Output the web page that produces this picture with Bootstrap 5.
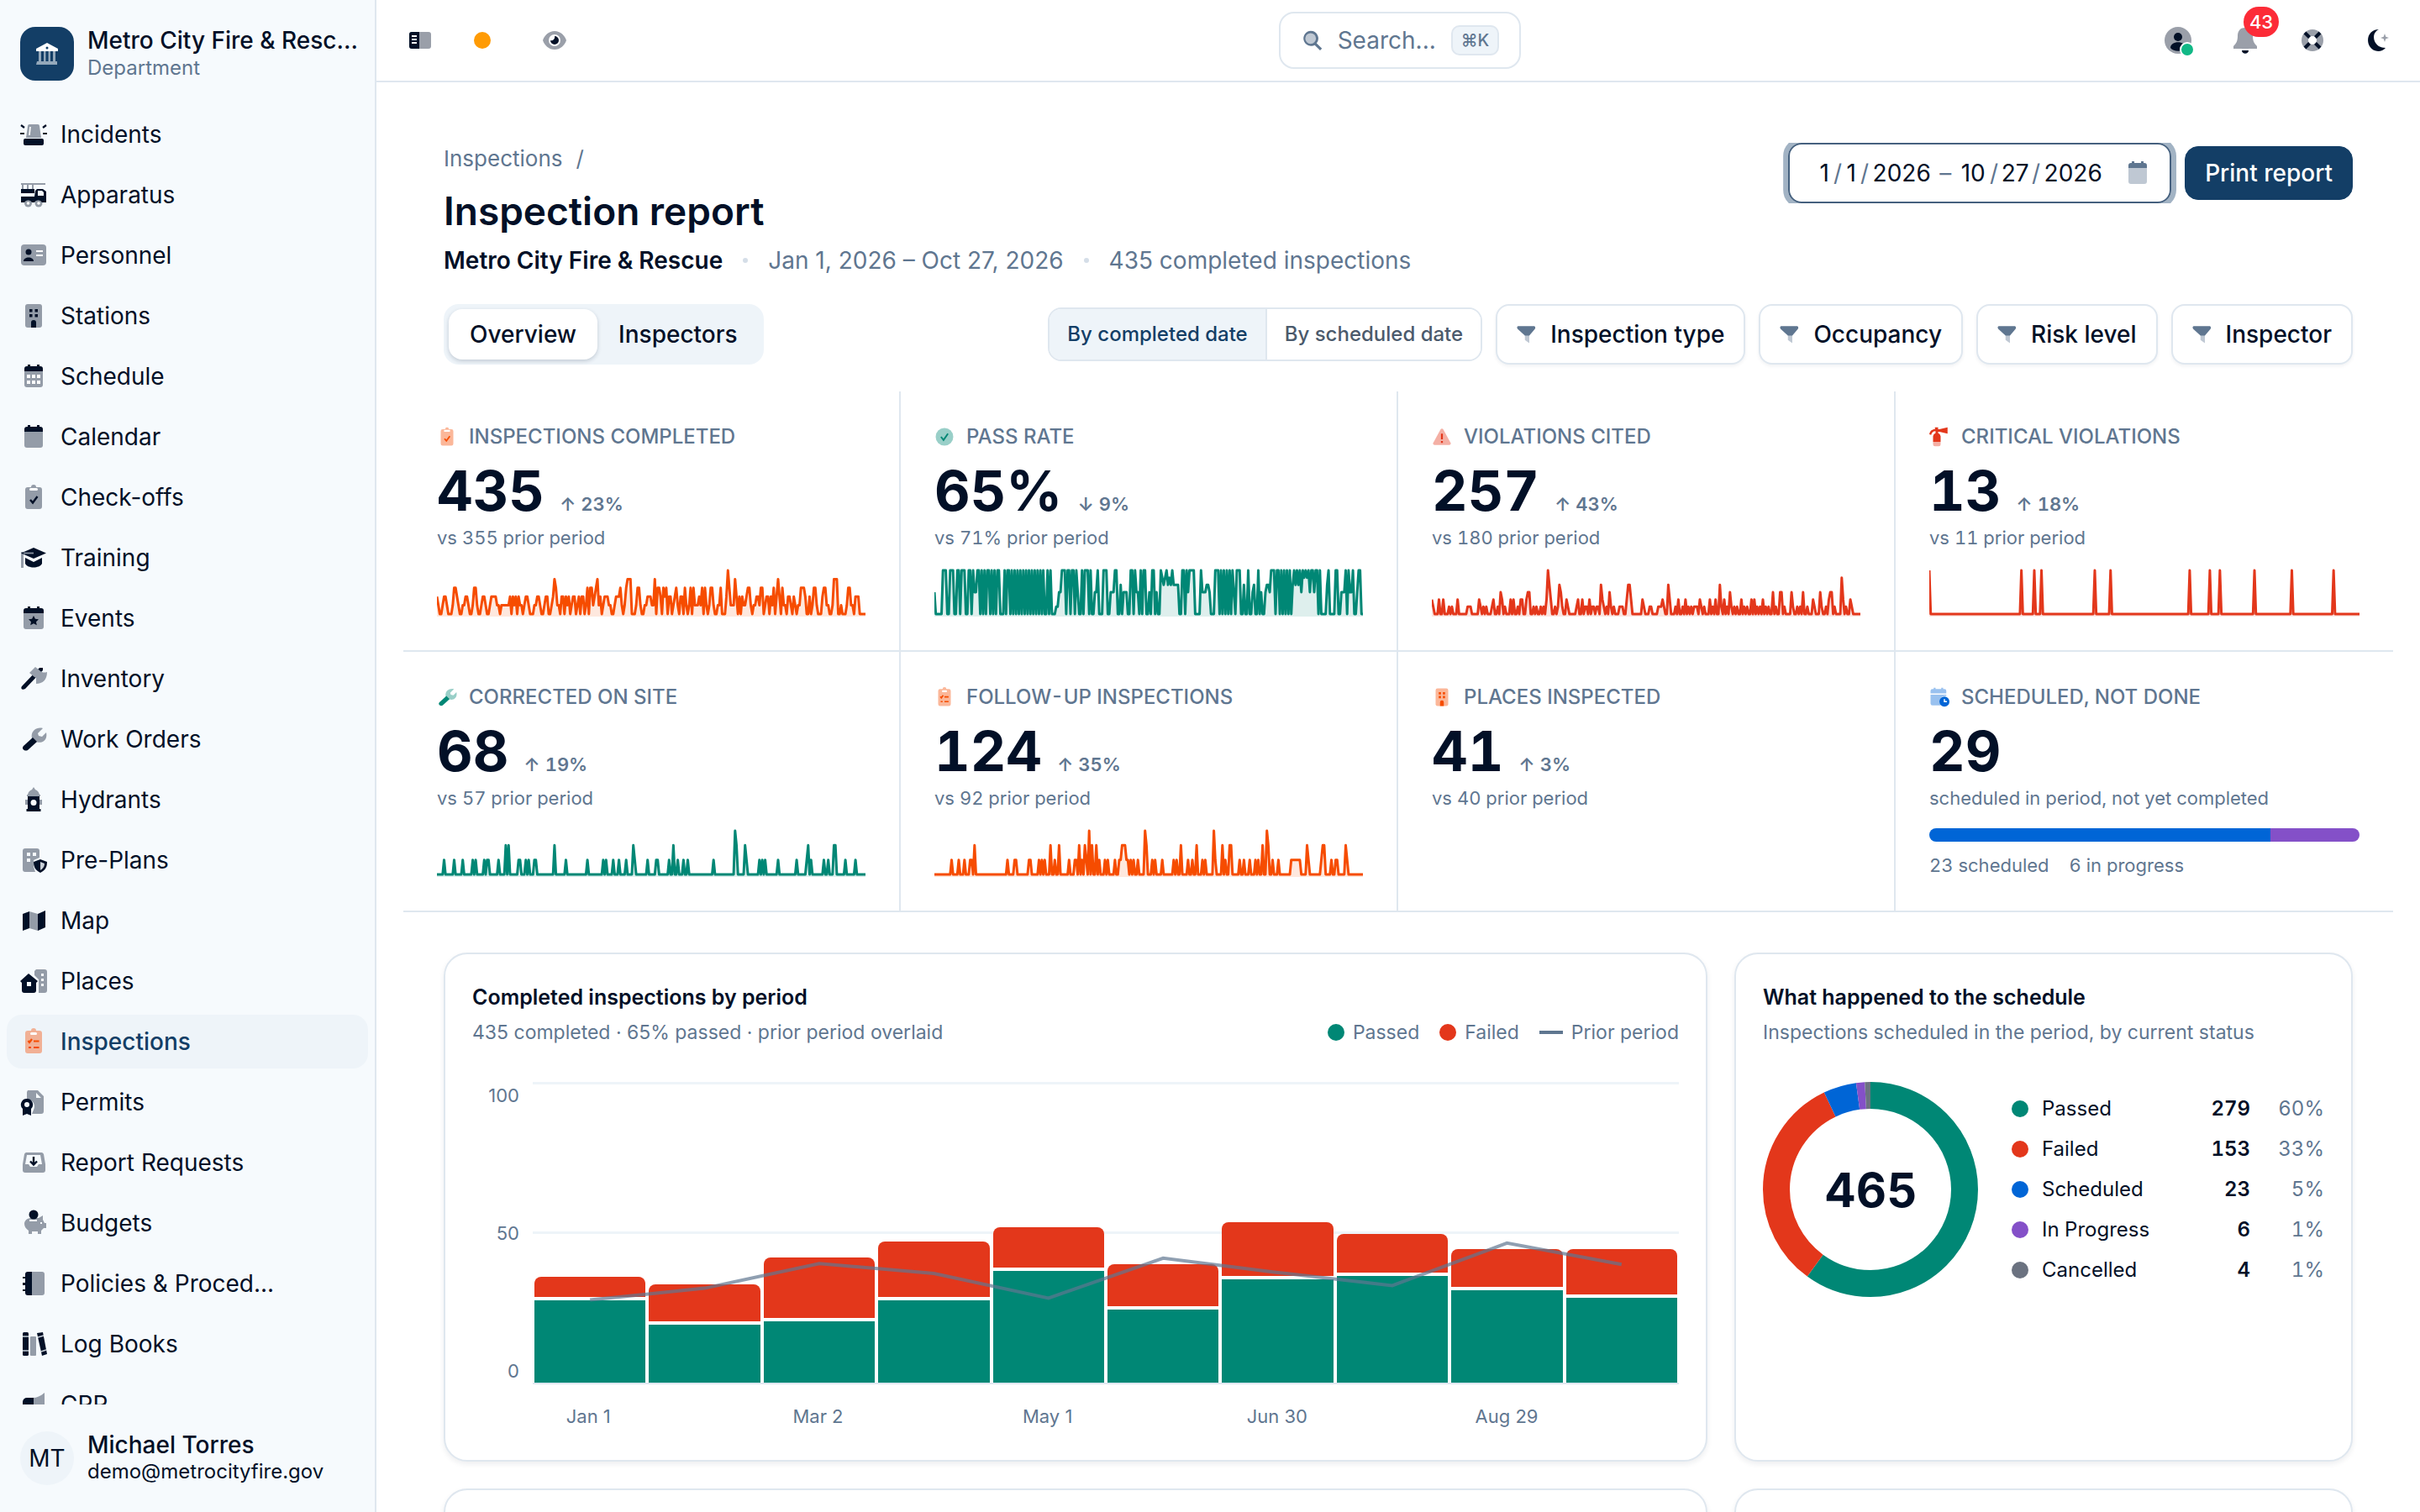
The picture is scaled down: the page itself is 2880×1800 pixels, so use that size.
<!DOCTYPE html>
<html lang="en">
<head>
<meta charset="utf-8">
<meta name="viewport" content="width=device-width, initial-scale=1">
<title>Inspection report</title>
<link href="https://cdn.jsdelivr.net/npm/bootstrap@5.3.0/dist/css/bootstrap.min.css" rel="stylesheet">
<style>
:root{--ink:#021027;--slate:#5f7690;--line:#dfe7ef;--navy:#133e66;--pale:#eef4f9;--side:#f6fafd;--green:#008775;--red:#e3371b;--orange:#f64c00;--blue:#0065d6;--purple:#8450c8;--gray:#6b7280}
body{font-family:Inter,"Liberation Sans",sans-serif;font-size:28px;line-height:40px;color:var(--ink);background:#fff}
button,input{font-family:inherit;color:inherit}
.app-shell{height:100vh;overflow:hidden}
.side-bar{width:448px;background:var(--side);border-right:2px solid var(--line)}
.brand-row{padding:32px 16px 0 24px;gap:16px;height:120px}
.brand-logo{width:64px;height:64px;border-radius:18px;background:var(--navy);color:#fff}
.brand-name{line-height:32px;white-space:nowrap}
.fs-sub{font-size:24px;line-height:34px}
.fs-tiny{font-size:22px;line-height:32px}
.slate{color:var(--slate)}
.side-scroll{padding:8px 8px 0;overflow:hidden;min-height:0}
.side-link{height:64px;margin-bottom:8px;padding:0 16px;gap:16px;border-radius:18px;color:var(--ink);text-decoration:none;flex:none}
.side-link.current{background:var(--pale);color:var(--navy);font-weight:500}
.side-link.current svg{color:var(--orange)}
.ico{width:32px;height:32px;flex:none;fill:currentColor}
.ico-sm{width:24px;height:24px}
.side-foot{padding:32px 24px;gap:16px}
.face{width:64px;height:64px;border-radius:50%;background:var(--pale)}
.side-foot .who,.side-foot .fs-sub{line-height:32px}
.top-bar{height:98px;border-bottom:2px solid var(--line);padding:0 32px 0 36px}
.icon-btn{border:0;background:none;padding:0;width:32px;height:32px;position:relative;display:flex}
.search-btn{height:68px;border:2px solid var(--line);border-radius:18px;background:#fff;padding:0 24px 0 26px;gap:18px;color:var(--slate)}
.key-cap{background:var(--pale);color:var(--slate);border:2px solid var(--line);border-radius:10px;font:500 20px/32px Inter,sans-serif;padding:0 10px}
.alert-count{position:absolute;left:14px;top:-24px;width:42px;height:36px;border-radius:18px;background:#fc2b37;color:#fff;font-size:22px;line-height:36px;font-weight:500}
.online-dot{position:absolute;right:-4px;bottom:-4px;width:18px;height:18px;border-radius:50%;background:#12b886;border:2px solid #fff}
.main-pane{padding:72px 80px 0;min-height:0;overflow:hidden}
.crumbs{font-size:26px;line-height:38px;gap:16px}
.crumbs a{color:var(--slate);text-decoration:none}
.page-title{font-size:46px;line-height:62px;font-weight:600;margin:12px 0 8px}
.dot-sep{width:6px;height:6px;border-radius:50%;background:#d5dee8}
.date-box{height:72px;border:2px solid #46617f;border-radius:16px;box-shadow:0 0 0 6px #a2b3c4;clip-path:inset(0 -6px);padding:0 22px 0 32px}
.date-box input{border:0;padding:0;background:none;text-align:center;outline:0}
.w-d1{width:18px}.w-d2{width:36px}.w-d4{width:74px}
.date-box .slash{width:14px;text-align:center;color:var(--slate)}
.btn-print{--bs-btn-bg:var(--navy);--bs-btn-color:#fff;--bs-btn-border-color:var(--navy);height:64px;font-size:28px;line-height:40px;font-weight:500;border-radius:16px;padding:0 23px}
.tab-set{background:var(--pale);border-radius:18px;padding:6px;height:72px}
.tab-set button{border:0;background:none;border-radius:16px;padding:0 25px;font-weight:500}
.tab-set button.on{background:#fff;box-shadow:0 2px 5px rgba(20,40,70,.2)}
.seg-set{height:64px;border:2px solid var(--line);border-radius:16px;overflow:hidden}
.seg-set button{border:0;background:#fff;font-size:24px;font-weight:500;padding:0 21px;color:#4b5a6c}
.seg-set button.on{background:var(--pale);color:var(--navy);border-right:2px solid var(--line)}
.filter-btn{height:72px;border:2px solid var(--line);border-radius:16px;background:#fff;padding:0 23px;gap:16px;font-weight:500;box-shadow:0 2px 4px rgba(20,40,70,.06)}
.filter-btn svg{color:var(--slate)}
.stat-grid{display:grid;grid-template-columns:repeat(4,1fr);margin:32px -48px 48px;font-variant-numeric:tabular-nums}
.stat-tile{padding:40px;height:310px;border-right:2px solid var(--line);border-bottom:2px solid var(--line)}
.stat-tile:nth-child(4n){border-right:0}
.stat-label{font-size:24px;line-height:28px;font-weight:500;color:var(--slate);gap:14px}
.stat-num{font-size:66px;line-height:72px;font-weight:700}
.stat-head{gap:18px;margin-top:14px}
.stat-delta{font-size:22px;font-weight:600;color:var(--slate)}
.stat-note{margin:4px 0 20px}
.spark{display:block;width:100%;height:60px}
.split-bar{height:16px;border-radius:8px;overflow:hidden;margin-bottom:12px}
.panel{border:2px solid var(--line);border-radius:28px;padding:32px;height:606px;box-shadow:0 3px 6px rgba(20,40,70,.08);background:#fff}
.panel h2{font-size:25px;line-height:38px;font-weight:600;margin:0}
.panel-note{font-size:23px;line-height:46px;color:var(--slate)}
.board{--bs-gutter-x:32px;--bs-gutter-y:32px}
.round-dot{width:20px;height:20px;border-radius:50%;flex:none}
.dash-mark{width:28px;height:4px;background:var(--slate)}
.legend-set{gap:24px}
.legend-set span{gap:10px}
.chart-row{margin-top:36px;height:360px}
.y-axis{width:56px;margin-right:16px;font-size:22px;line-height:32px;color:var(--slate)}
.plot{position:relative;flex:1;border-bottom:2px solid var(--line);background:linear-gradient(var(--pale),var(--pale)) 0 0/100% 3px no-repeat,linear-gradient(var(--pale),var(--pale)) 0 50%/100% 3px no-repeat}
.bar-col{flex:1;padding:0 2px;height:100%}
.bar-col .fail{background:var(--red);border-radius:8px 8px 0 0;margin-bottom:4px}
.bar-col .pass{background:var(--green)}
.trend{position:absolute;left:0;top:0;width:100%;height:100%}
.x-axis{margin:22px 0 0 70px;font-size:22px;line-height:32px;color:var(--slate)}
.x-axis span{flex:1}
.donut-row{margin-top:36px;gap:40px}
.donut{width:256px;height:256px;flex:none}
.tally{font-size:24px;line-height:48px;font-variant-numeric:tabular-nums}
.tally td{padding:0}
.c-num{width:90px}.c-pct{width:88px}
</style>
</head>
<body>
<svg width="0" height="0" class="position-absolute" aria-hidden="true">
<defs>
<symbol id="i-siren" viewBox="0 0 32 32"><path opacity=".4" d="M11 4h10a2 2 0 0 1 2 2l2 14H7L9 6a2 2 0 0 1 2-2z"/><path d="M12 7l-1 10" stroke="#fff" stroke-width="1.6"/><rect x="4" y="21" width="24" height="8" rx="2"/><path d="M0 15h5M27 15h5M1 5l4 3M31 5l-4 3" stroke="currentColor" stroke-width="2.200" fill="none"/></symbol>
<symbol id="i-truck" viewBox="0 0 32 32"><path opacity=".4" d="M1 2h29v2h-14V9h-2V4h-4V9H8V4H4v5H2V4H1z"/><path d="M1 9h16v5H1zM1 18h16l1-7 2-2h7l4 3v13h-5a5 5 0 0 0-9 0h-3a5 5 0 0 0-9 0H1z"/><path d="M21 11h5l2 2v4h-7z" fill="#f6fafd"/><g opacity=".4"><circle cx="9.500" cy="26" r="4.500"/><circle cx="22" cy="26" r="4.500"/></g><circle cx="9.500" cy="26" r="1.800" fill="#fff"/><circle cx="22" cy="26" r="1.800" fill="#fff"/></symbol>
<symbol id="i-id" viewBox="0 0 32 32"><rect opacity=".4" x="1" y="3" width="30" height="25" rx="4"/><circle cx="10" cy="12" r="3.500"/><path d="M4 23c0-6 12-6 12 0z"/><path d="M19 11h8M19 16h8" stroke="#fff" stroke-width="2"/></symbol>
<symbol id="i-bldg" viewBox="0 0 32 32"><rect opacity=".4" x="6" y="2" width="20" height="28" rx="3"/><path d="M11 8h3.500v3.500H11zM17.500 8H21v3.500h-3.500zM11 14h3.500v3.500H11zM17.500 14H21v3.500h-3.500zM13 30v-6a3 3 0 0 1 6 0v6z"/></symbol>
<symbol id="i-calgrid" viewBox="0 0 32 32"><path opacity=".4" d="M5 10h22v16a3 3 0 0 1-3 3H8a3 3 0 0 1-3-3z"/><path d="M5 10V7a3 3 0 0 1 3-3h1V2h3v2h8V2h3v2h1a3 3 0 0 1 3 3v3z"/><path d="M8 14h4v4H8zM14 14h4v4h-4zM20 14h4v4h-4zM8 21h4v4H8zM14 21h4v4h-4zM20 21h4v4h-4z" fill="#fff"/></symbol>
<symbol id="i-cal" viewBox="0 0 32 32"><path opacity=".4" d="M5 10h22v16a3 3 0 0 1-3 3H8a3 3 0 0 1-3-3z"/><path d="M5 10V7a3 3 0 0 1 3-3h1V2h3v2h8V2h3v2h1a3 3 0 0 1 3 3v3z"/></symbol>
<symbol id="i-clip" viewBox="0 0 32 32"><path opacity=".4" d="M9 4h4a3 3 0 0 1 6 0h4a3 3 0 0 1 3 3v20a3 3 0 0 1-3 3H9a3 3 0 0 1-3-3V7a3 3 0 0 1 3-3z"/><rect x="11" y="5" width="10" height="3" rx="1.500" fill="#fff"/><path d="M12 19l3 3.500L20.500 15" fill="none" stroke="currentColor" stroke-width="2.400"/></symbol>
<symbol id="i-cap" viewBox="0 0 32 32"><path opacity=".4" d="M1 9h3v19H1z"/><path d="M16 4l15 6.500L16 17 1 10.500zM6 16l10 5 10-5v7c-3 6-17 6-20 0z"/><path d="M4 10.500h12" stroke="#8a94a1" stroke-width="1.800"/></symbol>
<symbol id="i-star" viewBox="0 0 32 32"><path opacity=".4" d="M4 10h24v16a3 3 0 0 1-3 3H7a3 3 0 0 1-3-3z"/><path d="M4 10V7a3 3 0 0 1 3-3h2V2h3v2h8V2h3v2h2a3 3 0 0 1 3 3v3zM16 13l1.900 3.800 4.100.5-3 2.900.8 4.100-3.800-2-3.800 2 .8-4.100-3-2.900 4.100-.5z"/></symbol>
<symbol id="i-axe" viewBox="0 0 32 32"><path d="M2 25L20 6l3-3h4v3l-4 4L6 28c-3 2-6 0-4-3z"/><path fill="#979fab" d="M11 9l7-7 5 4c3 3 6 3 9 2 0 9-5 14-13 14v-7l-2-1z"/></symbol>
<symbol id="i-wrench" viewBox="0 0 32 32"><path d="M4 24l11-10 5 5L9 29c-4 2-8-2-5-5z"/><path opacity=".4" d="M14 15c-2-8 5-14 13-12l-6 6 1 3 4 1 5-5c2 9-5 14-12 11z"/></symbol>
<symbol id="i-hydrant" viewBox="0 0 32 32"><path opacity=".4" d="M9 10c1-4 3-5 5-6l2-3 2 3c2 1 4 2 5 6h1v2H8v-2zM6 16h3v6H6zM23 16h3v6h-3z"/><path fill-rule="evenodd" d="M9 12h14v15h1.500v3h-17v-3H9zM16 16a3.500 3.500 0 1 0 0 7 3.500 3.500 0 0 0 0-7z"/></symbol>
<symbol id="i-plan" viewBox="0 0 32 32"><path opacity=".4" fill-rule="evenodd" d="M6 2h14a3 3 0 0 1 3 3v8l-7 3v8l2 6H6a3 3 0 0 1-3-3V5a3 3 0 0 1 3-3zM8 7v4h4V7zM15 7v4h4V7zM8 14v4h4v-4z"/><path d="M24 15l8 3c0 6-2 10-8 13-6-3-8-7-8-13z"/><path d="M24 18l5 2c0 4-2 6-5 8z" fill="#c9d0d8"/></symbol>
<symbol id="i-map" viewBox="0 0 32 32"><path d="M3 8l8-3v20l-8 3zM21 8l9-4v20l-9 4z"/><path opacity=".4" d="M11 5l10 3v20l-10-3z"/></symbol>
<symbol id="i-places" viewBox="0 0 32 32"><path opacity=".4" fill-rule="evenodd" d="M19 2h10a3 3 0 0 1 3 3v22a3 3 0 0 1-3 3h-7V14l-5-5V4zM25 7v3h3V7zM25 13v3h3v-3zM25 19v3h3v-3z"/><path fill-rule="evenodd" d="M10 7l11 9-2 2v9a3 3 0 0 1-3 3H5a3 3 0 0 1-3-3v-9l-2-2zM8 17v5h5v-5z"/></symbol>
<symbol id="i-list" viewBox="0 0 32 32"><path opacity=".4" d="M9 3h4a3 3 0 0 1 6 0h4a3 3 0 0 1 3 3v21a3 3 0 0 1-3 3H9a3 3 0 0 1-3-3V6a3 3 0 0 1 3-3z"/><rect x="12" y="5" width="8" height="3" rx="1.500" fill="#fff"/><path d="M9.500 15l1.500 2 3-4M16 15.500h6.500M16 23h6.500M10 23h3" fill="none" stroke="currentColor" stroke-width="2.200"/></symbol>
<symbol id="i-permit" viewBox="0 0 32 32"><path opacity=".4" fill-rule="evenodd" d="M9 2h12l7 7v18a3 3 0 0 1-3 3H14c1-3 3-6 3-9 0-5-4-8-9-8V4zM19 5v6h6z"/><path fill-rule="evenodd" d="M8 12a7 7 0 0 1 5 12v8l-5-2-5 2v-8a7 7 0 0 1 5-12zM8 16a3 3 0 1 0 0 6 3 3 0 0 0 0-6z"/></symbol>
<symbol id="i-inbox" viewBox="0 0 32 32"><path opacity=".4" fill-rule="evenodd" d="M7 4h18a3 3 0 0 1 3 2l2 12v7a3 3 0 0 1-3 3H6a3 3 0 0 1-3-3v-7L5 6a3 3 0 0 1 2-2zM8 7L6 18h4l2 3h8l2-3h4L24 7z"/><path d="M16 9v9M12 14.500l4 4 4-4" fill="none" stroke="currentColor" stroke-width="2.400"/></symbol>
<symbol id="i-pig" viewBox="0 0 32 32"><circle cx="16" cy="6" r="5.500"/><path opacity=".4" fill-rule="evenodd" d="M12 10h10l5-3v5l2 4h2v6h-3l-3 3v4h-4v-3h-7v3h-4v-4c-3-2-5-5-5-8s2-6 7-7zM11 12v2h9v-2zM24 15v2h2v-2z"/></symbol>
<symbol id="i-book" viewBox="0 0 32 32"><path opacity=".4" d="M14 2h12a3 3 0 0 1 3 3v22a3 3 0 0 1-3 3H14z"/><path d="M9 2h5v28H9a3 3 0 0 1-3-3v-2H3v-2h3v-5H3v-3h3v-5H3V8h3V5a3 3 0 0 1 3-3z"/></symbol>
<symbol id="i-books" viewBox="0 0 32 32"><rect x="3" y="2" width="7" height="28" rx="1.500"/><rect opacity=".4" x="12" y="7" width="7" height="23" rx="1"/><path d="M20 3l7-1 5 26-6 2z"/><path d="M3 7h7M3 24h7M21 8l7-2M25 25l6-2" stroke="#c9d0d8" stroke-width="1.500"/></symbol>
<symbol id="i-horn" viewBox="0 0 32 32"><path opacity=".4" d="M15 8c5 0 9-2 14-6v26c-5-4-9-6-14-6z"/><path d="M8 8h8v14H8a5 5 0 0 1-5-5v-4a5 5 0 0 1 5-5z"/></symbol>
<symbol id="i-civic" viewBox="0 0 32 32"><path d="M16 3l13 7v3H3v-3z"/><circle cx="16" cy="9" r="1.500" fill="#133e66"/><path opacity=".55" d="M6 13h3v12H6zM12 13h2.500v12H12zM17.500 13H20v12h-2.500zM23 13h3v12h-3zM4 25h24v4H3z"/></symbol>
<symbol id="i-panel" viewBox="0 0 32 32"><rect opacity=".4" x="3" y="6" width="26" height="20" rx="3"/><path d="M6 6h9v20H6a3 3 0 0 1-3-3V9a3 3 0 0 1 3-3z"/><path d="M6 11h6M6 15h6M6 19h6" stroke="#fff" stroke-width="1.800"/></symbol>
<symbol id="i-eye" viewBox="0 0 32 32"><path opacity=".4" fill-rule="evenodd" d="M16 5C9 5 4 10 2 16c2 6 7 11 14 11s12-5 14-11C28 10 23 5 16 5zM16 9a7 7 0 1 1 0 14 7 7 0 0 1 0-14z"/><path d="M16 11a5 5 0 1 1-5 5c2 1 6-1 5-5z"/></symbol>
<symbol id="i-search" viewBox="0 0 32 32"><circle cx="13" cy="13" r="11" opacity=".4"/><path fill-rule="evenodd" d="M13 1a12 12 0 0 1 9.500 19.500L31 29l-3 3-8.500-8.500A12 12 0 1 1 13 1zM13 4.500a8.500 8.500 0 1 0 0 17 8.500 8.500 0 0 0 0-17z"/></symbol>
<symbol id="i-user" viewBox="0 0 32 32"><circle opacity=".4" cx="16" cy="16" r="16"/><circle cx="16" cy="12" r="5"/><path d="M7 25c0-9 18-9 18 0-4 5-14 5-18 0z"/></symbol>
<symbol id="i-bell" viewBox="0 0 32 32"><path opacity=".4" d="M16 1c7 0 9 5 9 10 0 6 2 9 5 12v3H2v-3c3-3 5-6 5-12C7 6 9 1 16 1z"/><path d="M12 28h8c0 5-8 5-8 0z"/></symbol>
<symbol id="i-ring" viewBox="0 0 32 32"><circle opacity=".4" cx="16" cy="16" r="9" fill="none" stroke="currentColor" stroke-width="8"/><path d="M7 7l5.500 5.500M25 7l-5.500 5.500M7 25l5.500-5.500M25 25l-5.500-5.500" stroke="currentColor" stroke-width="4"/></symbol>
<symbol id="i-moon" viewBox="0 0 32 32"><path d="M15 3c-6 3-7 9-5 14 2 5 7 8 13 8-5 6-15 5-19-2C-1 14 4 3 15 3z"/><path opacity=".4" d="M22 8l1.300 3.700L27 13l-3.700 1.300L22 18l-1.300-3.700L17 13l3.700-1.300z"/></symbol>
<symbol id="i-funnel" viewBox="0 0 32 32"><path opacity=".4" d="M13 16h7v14l-7-5z"/><path d="M3 3h24c3 0 3 3 1.500 5L20 18h-7L2 8C0 6 0 3 3 3z"/></symbol>
<symbol id="i-ok" viewBox="0 0 32 32"><circle opacity=".4" cx="16" cy="16" r="14"/><path d="M10.500 16l4 5L21.500 11" fill="none" stroke="currentColor" stroke-width="2.600"/></symbol>
<symbol id="i-warn" viewBox="0 0 32 32"><path opacity=".4" d="M14 4a2.500 2.500 0 0 1 4 0l12 22a2.500 2.500 0 0 1-2 3H4a2.500 2.500 0 0 1-2-3z"/><path d="M14.500 11h3v9h-3zM14.500 22.500h3v3h-3z"/></symbol>
<symbol id="i-ext" viewBox="0 0 32 32"><path opacity=".4" d="M6 24h12v4a3 3 0 0 1-3 3H9a3 3 0 0 1-3-3z"/><path d="M6 24v-9a6 6 0 0 1 4-5V7C6 7 4 9 3 13l-3-1c1-5 4-8 9-8V1h5v3h2l13-3v10l-13-3h-2v2a6 6 0 0 1 4 5v9z"/></symbol>
<symbol id="i-calclock" viewBox="0 0 32 32"><path opacity=".4" d="M5 3h2V1h3v2h9V1h3v2h2a3 3 0 0 1 3 3v4H2V6a3 3 0 0 1 3-3zM2 12h25v2c-9-1-13 8-9 15H5a3 3 0 0 1-3-3z"/><path fill-rule="evenodd" d="M24 15a8 8 0 1 1 0 16 8 8 0 0 1 0-16zM23 19v5h5v-2h-3v-3z"/></symbol>
</defs>
</svg>

<div class="app-shell d-flex">
<aside class="side-bar d-flex flex-column flex-shrink-0">
  <div class="brand-row d-flex flex-shrink-0">
    <div class="brand-logo d-flex align-items-center justify-content-center flex-shrink-0"><svg class="ico"><use href="#i-civic"/></svg></div>
    <div>
      <div class="brand-name fw-medium">Metro City Fire &amp; Resc...</div>
      <div class="fs-sub slate">Department</div>
    </div>
  </div>
  <nav class="side-scroll d-flex flex-column flex-grow-1" id="sideNav" aria-label="Main"></nav>
  <div class="side-foot d-flex flex-shrink-0">
    <div class="face d-flex align-items-center justify-content-center flex-shrink-0">MT</div>
    <div><div class="who fw-medium">Michael Torres</div><div class="fs-sub">demo@metrocityfire.gov</div></div>
  </div>
</aside>

<div class="d-flex flex-column flex-grow-1 overflow-hidden">
  <header class="top-bar d-flex align-items-center flex-shrink-0">
    <div class="d-flex align-items-center flex-grow-1 gap-5" style="flex-basis:0">
      <button class="icon-btn" aria-label="Toggle sidebar"><svg class="ico"><use href="#i-panel"/></svg></button>
      <button class="icon-btn align-items-center" aria-label="Status"><span class="round-dot" style="background:#ff9b05"></span></button>
      <button class="icon-btn" aria-label="View"><svg class="ico"><use href="#i-eye"/></svg></button>
    </div>
    <button class="search-btn d-flex align-items-center"><svg class="ico ico-sm"><use href="#i-search"/></svg>Search...<kbd class="key-cap">⌘K</kbd></button>
    <div class="d-flex align-items-center justify-content-end flex-grow-1 gap-5" style="flex-basis:0">
      <button class="icon-btn" aria-label="Account"><svg class="ico"><use href="#i-user"/></svg><span class="online-dot"></span></button>
      <button class="icon-btn" aria-label="Notifications"><svg class="ico"><use href="#i-bell"/></svg><span class="alert-count">43</span></button>
      <button class="icon-btn" aria-label="Help"><svg class="ico"><use href="#i-ring"/></svg></button>
      <button class="icon-btn" aria-label="Dark mode"><svg class="ico"><use href="#i-moon"/></svg></button>
    </div>
  </header>

  <main class="main-pane flex-grow-1">
    <div class="d-flex justify-content-between align-items-start">
      <div>
        <nav class="crumbs slate d-flex" aria-label="Breadcrumb"><a href="#">Inspections</a><span>/</span></nav>
        <h1 class="page-title">Inspection report</h1>
        <div class="d-flex align-items-center slate" style="gap:24px">
          <span class="fw-semibold" style="color:var(--ink)">Metro City Fire &amp; Rescue</span><span class="dot-sep"></span>
          <span>Jan 1, 2026 – Oct 27, 2026</span><span class="dot-sep"></span>
          <span>435 completed inspections</span>
        </div>
      </div>
      <div class="d-flex align-items-center gap-3">
        <div class="date-box d-flex align-items-center" role="group" aria-label="Date range">
          <input class="w-d1" aria-label="Start month" value="1"><span class="slash">/</span><input class="w-d1" aria-label="Start day" value="1"><span class="slash">/</span><input class="w-d4" aria-label="Start year" value="2026">
          <span class="slate px-2">–</span>
          <input class="w-d2" aria-label="End month" value="10"><span class="slash">/</span><input class="w-d2" aria-label="End day" value="27"><span class="slash">/</span><input class="w-d4" aria-label="End year" value="2026">
          <button class="icon-btn slate ms-4 align-items-center" aria-label="Open calendar"><svg class="ico"><use href="#i-cal"/></svg></button>
        </div>
        <button class="btn btn-print">Print report</button>
      </div>
    </div>

    <div class="d-flex align-items-center justify-content-between" style="margin-top:32px">
      <div class="tab-set d-flex" role="tablist"><button class="on" role="tab" aria-selected="true">Overview</button><button role="tab" aria-selected="false">Inspectors</button></div>
      <div class="d-flex align-items-center gap-3">
        <div class="seg-set d-flex"><button class="on">By completed date</button><button>By scheduled date</button></div>
        <button class="filter-btn d-flex align-items-center"><svg class="ico ico-sm"><use href="#i-funnel"/></svg>Inspection type</button>
        <button class="filter-btn d-flex align-items-center"><svg class="ico ico-sm"><use href="#i-funnel"/></svg>Occupancy</button>
        <button class="filter-btn d-flex align-items-center"><svg class="ico ico-sm"><use href="#i-funnel"/></svg>Risk level</button>
        <button class="filter-btn d-flex align-items-center"><svg class="ico ico-sm"><use href="#i-funnel"/></svg>Inspector</button>
      </div>
    </div>

    <section class="stat-grid" id="stats"></section>

    <div class="row board">
      <div class="col-8">
        <section class="panel">
          <h2>Completed inspections by period</h2>
          <div class="panel-note d-flex justify-content-between">
            <span>435 completed · 65% passed · prior period overlaid</span>
            <div class="legend-set d-flex">
              <span class="d-flex align-items-center"><i class="round-dot" style="background:var(--green)"></i>Passed</span>
              <span class="d-flex align-items-center"><i class="round-dot" style="background:var(--red)"></i>Failed</span>
              <span class="d-flex align-items-center"><i class="dash-mark"></i>Prior period</span>
            </div>
          </div>
          <div class="chart-row d-flex">
            <div class="y-axis d-flex flex-column justify-content-between text-end"><span>100</span><span>50</span><span>0</span></div>
            <div class="plot d-flex" id="plot"></div>
          </div>
          <div class="x-axis d-flex text-center"><span>Jan 1</span><span></span><span>Mar 2</span><span></span><span>May 1</span><span></span><span>Jun 30</span><span></span><span>Aug 29</span><span></span></div>
        </section>
      </div>
      <div class="col-4">
        <section class="panel">
          <h2>What happened to the schedule</h2>
          <div class="panel-note">Inspections scheduled in the period, by current status</div>
          <div class="donut-row d-flex align-items-center">
            <svg class="donut" viewBox="0 0 256 256" id="donut"><text x="128" y="149" text-anchor="middle" font-size="56" font-weight="700" fill="#021027">465</text></svg>
            <table class="tally flex-grow-1"><tbody id="tally"></tbody></table>
          </div>
        </section>
      </div>
      <div class="col-8"><section class="panel"></section></div>
      <div class="col-4"><section class="panel"></section></div>
    </div>
  </main>
</div>
</div>

<script src="https://cdn.jsdelivr.net/npm/bootstrap@5.3.0/dist/js/bootstrap.bundle.min.js"></script>
<script>
const icon = (id, cls = '') => `<svg class="ico ${cls}"><use href="#i-${id}"/></svg>`;

// Sidebar
const links = [['siren','Incidents'],['truck','Apparatus'],['id','Personnel'],['bldg','Stations'],['calgrid','Schedule'],['cal','Calendar'],['clip','Check-offs'],['cap','Training'],['star','Events'],['axe','Inventory'],['wrench','Work Orders'],['hydrant','Hydrants'],['plan','Pre-Plans'],['map','Map'],['places','Places'],['list','Inspections'],['permit','Permits'],['inbox','Report Requests'],['pig','Budgets'],['book','Policies & Proced...'],['books','Log Books'],['horn','CRR']];
document.getElementById('sideNav').innerHTML = links.map(([i, t]) =>
  `<a href="#" class="side-link d-flex align-items-center${t === 'Inspections' ? ' current' : ''}">${icon(i)}<span>${t.replace('&', '&amp;')}</span></a>`).join('');

// Daily series, 300 days
const DAYS = 300;
const peaks = s => { const a = Array(DAYS).fill(0); s.split(' ').forEach(p => { const [d, v] = p.split(':'); a[+d] = +(v || 1); }); return a; };
const digits = s => s.replace(/\s/g, '').split('').map(Number);
function spark(data, max, color) {
  const pts = data.map((v, i) => `${(i * 510 / (data.length - 1)).toFixed(1)},${(55 - v / max * 52).toFixed(1)}`).join(' ');
  return `<svg class="spark" viewBox="0 0 510 60" preserveAspectRatio="none"><polygon points="0,58 ${pts} 510,58" fill="${color}" opacity=".13"/><polyline points="${pts}" fill="none" stroke="${color}" stroke-width="3" stroke-linejoin="round" vector-effect="non-scaling-stroke"/></svg>`;
}
const completed = digits(`2100122100 0133210011 2210013310 0122100122 2211011111 1202120211 0122100011 2210012200 1243110220 2120122012
 0220130331 2341201222 1100122231 0134440001 3310011222 1140332032 3022012310 2203101303 1112130310 1331001130
 0025311142 0202112331 0112213301 2202130242 0311022102 1011333200 2013310002 3311001444 0010001331 0002444200`);
completed.splice(290, 10, ...digits('1022200000'));
const passRate = digits(`3000006660 0666006606 6600660633 6606060660 6060660006 0660606060 6060606060 6060606006 0600011336 6606606606
 3006066606 0033600066 6003336600 4033300660 6330606600 3066030065 4564546444 4006606366 6600006333 4430006660
 6060606063 0666004006 0034006030 0344366606 6060606060 6066600606 6060606606 0664006060 3336066600 6046363060`);
passRate.splice(250, 50, ...digits('4646463656 5636636606 0000460000 6600333606 3360036600'));
const violations = peaks('0:2 1:1 5:2 8:2 12 14 18:2 25 26 27 33:2 34 36 38 42 43:2 46 48:3 49:2 51 55:2 57:2 60 62:2 63:2 66:2 67:3 68:3 71 73 76 78 80:2 81:6 82:4 83:2 86 88 89:4 90:3 91 94:2 95 101 102:2 105:2 107 108 110:2 112 113 115 116 118:4 119:2 120 122 124:3 125:1 127 131 132 133 136:2 137:4 138:4 139:2 147:2 148 152 153 158 159 160 161:2 162 165:4 166:2 170 172:2 175 177:2 179 181 183 184 185 187:2 188 190 194:2 196 198:2 201:4 202:1 204:2 206 208:3 209:1 211 213 216:2 218 220 223:2 225:2 227 229 231:2 233 235 238:3 240 243:3 244:3 246 251:3 252 255 257 259:3 262 266:2 267 271:3 272 275 277:2 278:3 279:3 281 286:5 287:2 289 292:2 293:1');
const critical = peaks('0 64 73 78 115 126 181 195 202 226 252 281');
const corrected = peaks('5 12 18 25 27 33 35 36 43 48:2 50:2 57 58 62 64 68 69 82:2 90 105 116 118 123 127 132 137:2 138 147 153 154 162 165:2 168 172 175 193 208:3 209:2 215:2 216 225 227 229 238 251 258 259:2 261 270 273 277:2 278:2 285 292');
const followUp = peaks('12 17 21 25 26 28:2 51 56 57 66 67 73 75 77 81:2 84 87:2 94 98 99 101:2 103 105:2 106 108:3 110:2 113:2 115 119 121 126 129 130 131:2 132:2 133:2 134 135 137 139 142 147:3 148:2 152 154 159 167 169 172:2 177 180 183:2 187 189 195:3 196:1 201:2 203 206:2 207:2 213 216 220 224 226 229:2 232:3 233:2 236 240 249 250 251 252 253 254 255 260:2 261 270 271:2 272:2 277 280 281 287:2 288');

const G = '#008775', R = '#e3371b', O = '#f64c00', B = '#0065d6';
const tiles = [
  ['clip', O, 'INSPECTIONS COMPLETED', '435', '↑ 23%', 'vs 355 prior period', spark(completed, 5, O)],
  ['ok', G, 'PASS RATE', '65%', '↓ 9%', 'vs 71% prior period', spark(passRate, 6, G)],
  ['warn', R, 'VIOLATIONS CITED', '257', '↑ 43%', 'vs 180 prior period', spark(violations, 6, R)],
  ['ext', R, 'CRITICAL VIOLATIONS', '13', '↑ 18%', 'vs 11 prior period', spark(critical, 1, R)],
  ['wrench', G, 'CORRECTED ON SITE', '68', '↑ 19%', 'vs 57 prior period', spark(corrected, 3, G)],
  ['list', O, 'FOLLOW-UP INSPECTIONS', '124', '↑ 35%', 'vs 92 prior period', spark(followUp, 3, O)],
  ['bldg', O, 'PLACES INSPECTED', '41', '↑ 3%', 'vs 40 prior period', ''],
  ['calclock', B, 'SCHEDULED, NOT DONE', '29', '', 'scheduled in period, not yet completed',
    `<div class="split-bar d-flex"><div style="width:79.3%;background:var(--blue)"></div><div class="flex-grow-1" style="background:var(--purple)"></div></div><div class="fs-tiny slate d-flex gap-4"><span>23 scheduled</span><span>6 in progress</span></div>`]
];
document.getElementById('stats').innerHTML = tiles.map(([i, c, l, n, d, s, x]) =>
  `<div class="stat-tile"><div class="stat-label d-flex align-items-center"><span class="d-flex" style="color:${c}">${icon(i, 'ico-sm')}</span>${l}</div>
  <div class="stat-head d-flex align-items-baseline"><span class="stat-num">${n}</span><span class="stat-delta">${d}</span></div>
  <div class="stat-note fs-tiny slate">${s}</div>${x}</div>`).join('');

// Stacked bars with the prior period drawn over them (axis 0–100)
const passed = [27.5,19.3,20.4,27.5,37.2,24.3,34.4,35.5,30.6,28.3];
const failed = [6.7,12.3,20.1,18.4,13.4,14,17.9,12.8,12.8,15.1];
const prior = [27.5,31.4,39.6,36.3,28.1,41.4,36.6,32.3,46.4,39.3];
document.getElementById('plot').innerHTML = passed.map((p, i) =>
  `<div class="bar-col d-flex flex-column justify-content-end"><div class="fail" style="height:${failed[i]}%"></div><div class="pass" style="height:${p}%"></div></div>`).join('') +
  `<svg class="trend" viewBox="0 0 100 100" preserveAspectRatio="none"><polyline points="${prior.map((v, i) => `${5 + i * 10},${100 - v}`).join(' ')}" fill="none" stroke="#5f7690" stroke-opacity=".7" stroke-width="4" vector-effect="non-scaling-stroke"/></svg>`;

// Schedule donut and its table
const status = [['Passed',279,'60%',G],['Failed',153,'33%',R],['Scheduled',23,'5%',B],['In Progress',6,'1%','#8450c8'],['Cancelled',4,'1%','#6b7280']];
let from = 0, ring = '';
status.forEach(([, n, , c]) => { const part = n / 465 * 100; ring += `<circle cx="128" cy="128" r="112" fill="none" stroke="${c}" stroke-width="32" pathLength="100" stroke-dasharray="${part} ${100 - part}" stroke-dashoffset="${-from}" transform="rotate(-90 128 128)"/>`; from += part; });
document.getElementById('donut').insertAdjacentHTML('afterbegin', ring);
document.getElementById('tally').innerHTML = status.map(([t, n, p, c]) =>
  `<tr><td><span class="d-flex align-items-center gap-3"><i class="round-dot" style="background:${c}"></i>${t}</span></td><td class="c-num text-end fw-semibold">${n}</td><td class="c-pct text-end slate">${p}</td></tr>`).join('');
</script>
</body>
</html>
